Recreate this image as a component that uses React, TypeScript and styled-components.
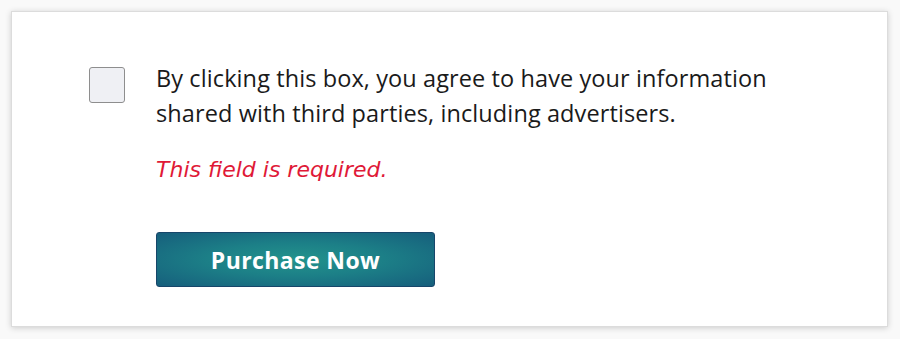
import { FC } from "react";
import styled, { createGlobalStyle } from "styled-components";

const GlobalStyle = createGlobalStyle`
  html, body {
    margin: 0;
    padding: 0;
    background: #ffffff;
  }
  body {
    font-family: "Open Sans", "Liberation Sans", sans-serif;
  }
`;

const Page = styled.div`
  width: 900px;
  height: 339px;
  box-sizing: border-box;
  padding: 11px 12px 12px 11px;
  background: #f9f9f9;
`;

const Card = styled.div`
  box-sizing: border-box;
  height: 316px;
  background: #ffffff;
  border: 1px solid #dcdcdc;
  box-shadow: 0 1px 6px rgba(0, 0, 0, 0.18);
  padding: 55px 40px 0 77px;
`;

const ConsentRow = styled.label`
  display: flex;
  align-items: flex-start;
  gap: 31px;
`;

const CheckBox = styled.span`
  flex: none;
  box-sizing: border-box;
  width: 36px;
  height: 36px;
  background: #eff0f4;
  border: 1px solid #8e8e8e;
  border-radius: 3px;
`;

const FieldBody = styled.div`
  display: flex;
  flex-direction: column;
  margin-top: -6px;
`;

const ConsentText = styled.p`
  margin: 0;
  font-size: 23.5px;
  line-height: 35px;
  letter-spacing: 0.1px;
  color: #1a1a1a;
  max-width: 625px;
`;

const ErrorText = styled.p`
  margin: 24px 0 0;
  font-family: "DejaVu Sans", "Open Sans", sans-serif;
  font-size: 22px;
  line-height: 30px;
  font-style: italic;
  color: #e01937;
`;

const PurchaseButton = styled.button`
  margin-top: 47px;
  width: 279px;
  height: 55px;
  border: 1px solid #17466a;
  border-radius: 3px;
  background: radial-gradient(ellipse at center, #23938c 0%, #1c7f87 45%, #165e7c 100%);
  color: #ffffff;
  font-family: "Open Sans", "Liberation Sans", sans-serif;
  font-size: 23px;
  font-weight: 700;
  letter-spacing: 0.4px;
  cursor: pointer;
`;

const App: FC = () => {
  return (
    <>
      <GlobalStyle />
      <Page>
        <Card>
          <ConsentRow>
            <CheckBox role="checkbox" aria-checked="false" />
            <FieldBody>
              <ConsentText>
                By clicking this box, you agree to have your information shared
                with third parties, including advertisers.
              </ConsentText>
              <ErrorText>This field is required.</ErrorText>
              <div>
                <PurchaseButton>Purchase Now</PurchaseButton>
              </div>
            </FieldBody>
          </ConsentRow>
        </Card>
      </Page>
    </>
  );
};

export default App;
